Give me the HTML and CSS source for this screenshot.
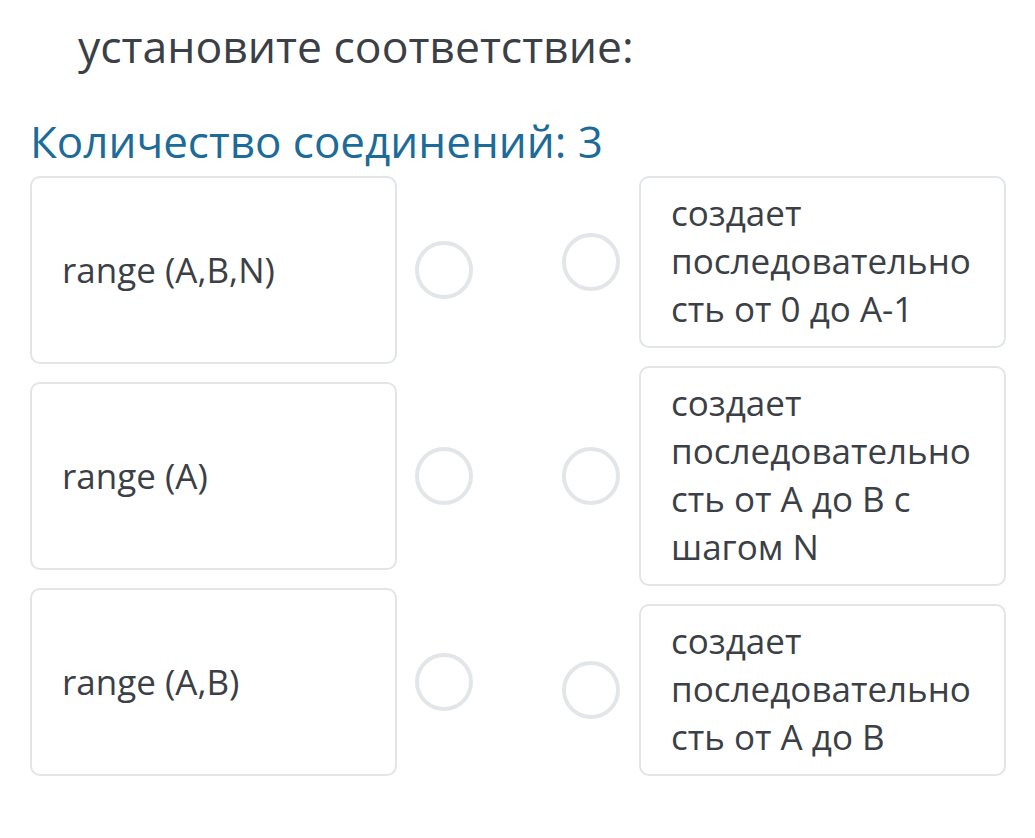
FILE: index.html
```html
<!DOCTYPE html>
<html lang="ru">
<head>
<meta charset="utf-8">
<title>Соответствие</title>
<link rel="stylesheet" href="styles.css">
</head>
<body>
<main class="page">
  <h1 class="question">установите соответствие:</h1>
  <h2 class="count">Количество соединений: 3</h2>
  <div class="board">
    <div class="col col-left">
      <div class="item">
        <div class="card card-left">range (A,B,N)</div>
        <span class="dot"></span>
      </div>
      <div class="item">
        <div class="card card-left">range (A)</div>
        <span class="dot"></span>
      </div>
      <div class="item">
        <div class="card card-left">range (A,B)</div>
        <span class="dot"></span>
      </div>
    </div>
    <div class="col col-right">
      <div class="item">
        <span class="dot"></span>
        <div class="card card-right">создает последовательность от 0 до A-1</div>
      </div>
      <div class="item">
        <span class="dot"></span>
        <div class="card card-right">создает последовательность от A до B с шагом N</div>
      </div>
      <div class="item">
        <span class="dot"></span>
        <div class="card card-right">создает последовательность от A до B</div>
      </div>
    </div>
  </div>
</main>
</body>
</html>
```

FILE: styles.css
```css
html, body {
  margin: 0;
  padding: 0;
  background: #ffffff;
}

body {
  font-family: "Open Sans", "Liberation Sans", sans-serif;
  color: #3b4046;
}

.page {
  padding: 18px 29px 0 30px;
}

.question {
  margin: 0 0 42px 48px;
  font-size: 44.5px;
  font-weight: 400;
  line-height: 55px;
  color: #3b4046;
}

.count {
  margin: 0 0 9px 0;
  font-size: 44px;
  font-weight: 400;
  line-height: 52px;
  color: #1d6b98;
}

.board {
  display: flex;
  justify-content: space-between;
  width: 976px;
}

.col {
  display: flex;
  flex-direction: column;
  gap: 18px;
}

.col-left .item {
  flex: 1;
}

.item {
  display: flex;
  align-items: center;
}

.card {
  box-sizing: border-box;
  width: 367px;
  border: 2px solid #e2e5e8;
  border-radius: 10px;
  background: #fff;
  font-size: 35px;
  line-height: 48px;
  overflow-wrap: break-word;
}

.card-left {
  align-self: stretch;
  display: flex;
  align-items: center;
  padding: 0 30px;
}

.card-right {
  padding: 11px 18px 13px 30px;
}

.dot {
  box-sizing: border-box;
  flex: none;
  width: 58px;
  height: 58px;
  border: 4px solid #e3e6e9;
  border-radius: 50%;
}

.col-left .dot {
  margin-left: 18px;
}

.col-right .dot {
  margin-right: 19px;
}
```
